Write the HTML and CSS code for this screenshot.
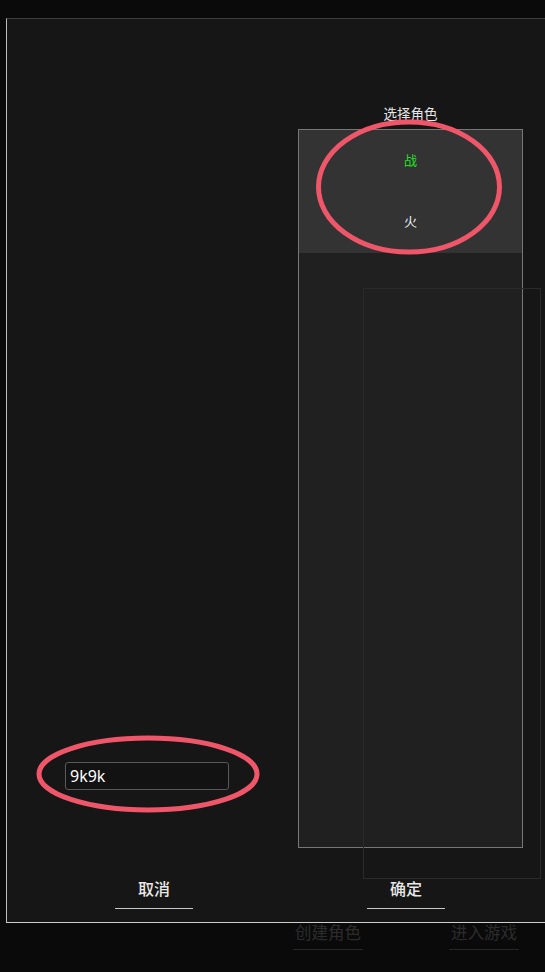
FILE: index.html
```html
<!DOCTYPE html>
<html lang="zh-CN">
<head>
    <meta charset="UTF-8">
    <meta name="viewport" content="width=device-width, initial-scale=1.0">
    <title>选择角色</title>
    <link rel="stylesheet" href="styles.css">
</head>
<body>

    <!-- Page behind the dialog -->
    <main class="page"></main>
    <nav class="bottom-nav">
        <a class="nav-link">创建角色</a>
        <a class="nav-link">进入游戏</a>
    </nav>

    <!-- Create role dialog -->
    <div class="dialog">
        <div class="dialog-body">
            <div class="left-col">
                <input type="text" class="name-input" value="9k9k">
            </div>
            <div class="right-col">
                <div class="list-title">选择角色</div>
                <div class="role-list">
                    <div class="role-item active">
                        <span class="role-class">战</span>
                        <span class="role-name">火</span>
                    </div>
                </div>
            </div>
        </div>
        <div class="actions">
            <button class="action-btn">取消</button>
            <button class="action-btn">确定</button>
        </div>
        <div class="ghost-frame"></div>
    </div>

    <!-- Annotation marks -->
    <svg class="mark mark-list" width="200" height="150" viewBox="0 0 200 150">
        <ellipse cx="100" cy="75" rx="90.5" ry="65" />
    </svg>
    <svg class="mark mark-input" width="240" height="90" viewBox="0 0 240 90">
        <ellipse cx="120" cy="45" rx="109" ry="36" />
    </svg>

</body>
</html>
```

FILE: styles.css
```css
* {
    margin: 0;
    padding: 0;
    box-sizing: border-box;
}

body {
    display: flex;
    flex-direction: column;
    min-height: 100vh;
    background-color: #0a0a0a;
    color: #ddd;
    font-family: "Noto Sans", "Noto Sans CJK SC", sans-serif;
    overflow: hidden;
}

.page {
    flex: 1;
}

.bottom-nav {
    display: flex;
    padding-left: 293px;
    gap: 86px;
    margin-bottom: 22px;
}

.nav-link {
    width: 70px;
    padding-bottom: 6px;
    border-bottom: 1px solid #262626;
    color: #2c2c2c;
    font-size: 16.5px;
    line-height: 20px;
    text-align: center;
}

/* Dialog */
.dialog {
    position: absolute;
    left: 6px;
    top: 18px;
    width: 560px;
    height: 905px;
    display: flex;
    flex-direction: column;
    background-color: #161616;
    border-top: 1px solid #3c3c3c;
    border-left: 1px solid #bdbdbd;
    border-bottom: 1px solid #cfcfcf;
}

.dialog-body {
    display: flex;
}

.left-col {
    width: 291px;
    display: flex;
    align-items: flex-end;
    padding-left: 58px;
    padding-bottom: 58px;
}

.name-input {
    width: 164px;
    height: 28px;
    padding: 0 4px;
    background-color: #121212;
    border: 1px solid #5a5a5a;
    border-radius: 3px;
    color: #fff;
    font-family: "Noto Sans", sans-serif;
    font-size: 16px;
    outline: none;
}

.right-col {
    width: 225px;
    padding-top: 86px;
}

.list-title {
    font-size: 13.5px;
    line-height: 18px;
    text-align: center;
    color: #e6e6e6;
    margin-bottom: 6px;
}

.role-list {
    height: 719px;
    background-color: #202020;
    border: 1px solid #777;
}

.role-item {
    height: 123px;
    display: flex;
    flex-direction: column;
    align-items: center;
    padding-top: 21px;
    gap: 42px;
    font-size: 13px;
    line-height: 19px;
}

.role-item.active {
    background-color: #333;
}

.role-class {
    color: #22e022;
}

.role-name {
    color: #f0f0f0;
}

.actions {
    display: flex;
    padding-left: 108px;
    gap: 174px;
    margin-top: 30px;
}

.action-btn {
    width: 78px;
    padding-bottom: 10px;
    background: none;
    border: none;
    border-bottom: 1px solid #c8c8c8;
    color: #e8e8e8;
    font-family: "Noto Sans CJK SC", sans-serif;
    font-size: 16px;
    font-weight: 500;
    line-height: 20px;
    cursor: pointer;
}

.ghost-frame {
    position: absolute;
    left: 356px;
    top: 269px;
    width: 178px;
    height: 591px;
    border: 1px solid #2a2a2a;
    pointer-events: none;
}

/* Red annotation ellipses */
.mark {
    position: absolute;
    fill: none;
    stroke: #f0566a;
    stroke-width: 5;
}

.mark-list {
    left: 309px;
    top: 112px;
}

.mark-input {
    left: 28px;
    top: 729px;
}
```
